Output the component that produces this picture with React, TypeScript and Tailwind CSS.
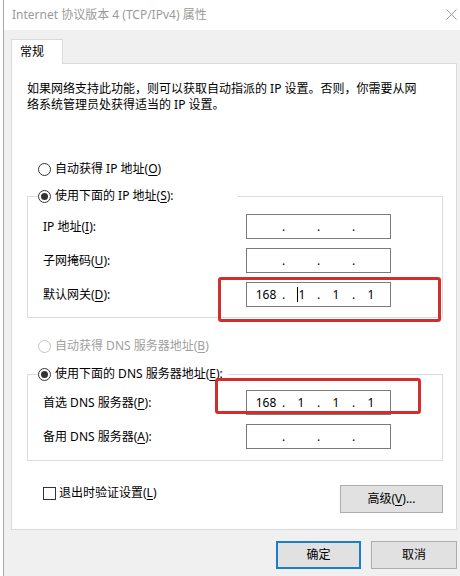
import React from 'react';

const font = { fontFamily: '"Noto Sans", "Noto Sans CJK SC", sans-serif' };

function Radio({ checked, disabled }: { checked?: boolean; disabled?: boolean }) {
  return (
    <span
      className={`flex h-[13px] w-[13px] shrink-0 items-center justify-center rounded-full border bg-white ${
        disabled ? 'border-[#c4c4c4]' : 'border-[#333333]'
      }`}
    >
      {checked && <span className="h-[7px] w-[7px] rounded-full bg-[#333333]" />}
    </span>
  );
}

function Key({ k }: { k: string }) {
  return <span className="underline underline-offset-2">{k}</span>;
}

function IpField({ parts, cursor }: { parts?: string[]; cursor?: boolean }) {
  const cells = parts ?? ['', '', '', ''];
  return (
    <div className="flex h-[25px] w-[145px] items-center justify-center border border-[#7a7a7a] bg-white text-[12px] text-black">
      {cells.map((p, i) => (
        <React.Fragment key={i}>
          <span className="flex w-[28px] items-center justify-center">
            {cursor && i === 1 && <span className="mr-[1px] inline-block h-[15px] w-px bg-black" />}
            {p}
          </span>
          {i < 3 && <span className="w-[7px] text-center">.</span>}
        </React.Fragment>
      ))}
    </div>
  );
}

function Row({ label, children }: { label: React.ReactNode; children: React.ReactNode }) {
  return (
    <div className="flex h-[25px] items-center">
      <span className="w-[203px]">{label}</span>
      {children}
    </div>
  );
}

function RedBox({ className }: { className: string }) {
  return <div className={`pointer-events-none absolute rounded-[3px] border-[3px] border-[#d0302c] ${className}`} />;
}

export default function App() {
  return (
    <div className="flex h-[576px] w-[460px] overflow-hidden bg-white text-[12px] text-black" style={font}>
      <div className="w-[4px] shrink-0 border-r border-[#a8a8a8] bg-white" />
      <div className="flex flex-1 flex-col">
        <div className="flex h-[30px] items-center justify-between bg-white pl-[8px] pr-[3px]">
          <span className="text-[12px] text-[#9a9a9a]">Internet 协议版本 4 (TCP/IPv4) 属性</span>
          <svg width="11" height="11" viewBox="0 0 11 11" className="mb-[1px]">
            <path d="M0.5 0.5L10.5 10.5M10.5 0.5L0.5 10.5" stroke="#9a9a9a" strokeWidth="1" />
          </svg>
        </div>

        <div className="flex-1 bg-[#f0f0f0] pl-[7px] pr-[3px] pt-[9px]">
          <div className="relative z-10 -mb-px flex h-[25px] w-[52px] items-center border border-b-0 border-[#d9d9d9] bg-white pl-[8px]">
            常规
          </div>

          <div className="border border-[#d9d9d9] bg-white pb-[16px] pl-[15px] pr-[13px] pt-[17px]">
            <p className="leading-[16px]">
              如果网络支持此功能，则可以获取自动指派的 IP 设置。否则，你需要从网
              <br />
              络系统管理员处获得适当的 IP 设置。
            </p>

            <div className="ml-[11px] mt-[48px] flex h-[16px] items-center gap-[4px]">
              <Radio />
              <span>
                自动获得 IP 地址(<Key k="O" />)
              </span>
            </div>

            <fieldset className="mt-[11px] border border-[#dcdcdc] pb-[10px]">
              <legend className="ml-[10px] flex h-[16px] w-[200px] items-center gap-[4px]">
                <Radio checked />
                <span>
                  使用下面的 IP 地址(<Key k="S" />):
                </span>
              </legend>
              <div className="mt-[10px] flex flex-col gap-[9px] pl-[15px]">
                <Row label={<>IP 地址(<Key k="I" />):</>}>
                  <IpField />
                </Row>
                <Row label={<>子网掩码(<Key k="U" />):</>}>
                  <IpField />
                </Row>
                <Row label={<>默认网关(<Key k="D" />):</>}>
                  <div className="relative">
                    <IpField parts={['168', '1', '1', '1']} cursor />
                    <RedBox className="left-[-28px] top-[-5px] h-[45px] w-[223px]" />
                  </div>
                </Row>
              </div>
            </fieldset>

            <div className="ml-[11px] mt-[20px] flex h-[16px] items-center gap-[4px] text-[#a0a0a0]">
              <Radio disabled />
              <span>
                自动获得 DNS 服务器地址(<Key k="B" />)
              </span>
            </div>

            <fieldset className="mt-[12px] border border-[#dcdcdc] pb-[11px]">
              <legend className="ml-[10px] flex h-[16px] w-[190px] items-center gap-[4px]">
                <Radio checked />
                <span>
                  使用下面的 DNS 服务器地址(<Key k="E" />):
                </span>
              </legend>
              <div className="mt-[8px] flex flex-col gap-[9px] pl-[15px]">
                <Row label={<>首选 DNS 服务器(<Key k="P" />):</>}>
                  <div className="relative">
                    <IpField parts={['168', '1', '1', '1']} />
                    <RedBox className="left-[-31px] top-[-12px] h-[36px] w-[206px]" />
                  </div>
                </Row>
                <Row label={<>备用 DNS 服务器(<Key k="A" />):</>}>
                  <IpField />
                </Row>
              </div>
            </fieldset>

            <div className="mt-[24px] flex items-start justify-between">
              <div className="ml-[16px] flex h-[16px] items-center gap-[3px]">
                <span className="h-[13px] w-[13px] border border-[#333333] bg-white" />
                <span>
                  退出时验证设置(<Key k="L" />)
                </span>
              </div>
              <button className="h-[28px] w-[103px] border border-[#adadad] bg-[#e1e1e1]">
                高级(<Key k="V" />)...
              </button>
            </div>
          </div>

          <div className="mt-[11px] flex justify-end gap-[10px]">
            <button className="h-[28px] w-[85px] border-2 border-[#1a7fc4] bg-[#e1e1e1]">确定</button>
            <button className="h-[28px] w-[86px] border border-[#adadad] bg-[#e1e1e1]">取消</button>
          </div>
        </div>
      </div>
    </div>
  );
}
